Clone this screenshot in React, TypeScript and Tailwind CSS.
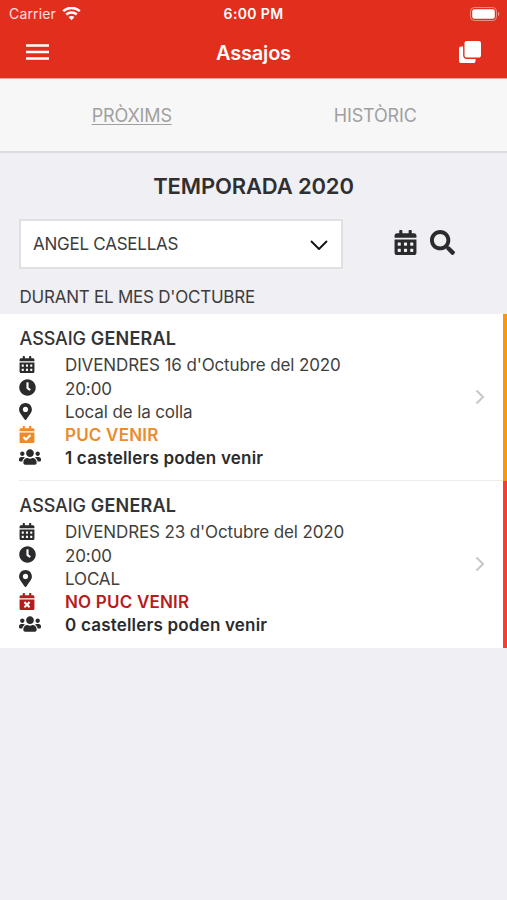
import type { ReactNode } from 'react';
import {
  FaCalendarAlt,
  FaCalendarCheck,
  FaCalendarTimes,
  FaClock,
  FaClone,
  FaMapMarkerAlt,
  FaSearch,
  FaUsers,
} from 'react-icons/fa';

type Rehearsal = {
  date: string;
  time: string;
  place: string;
  going: boolean;
  count: number;
};

const rehearsals: Rehearsal[] = [
  { date: "DIVENDRES 16 d'Octubre del 2020", time: '20:00', place: 'Local de la colla', going: true, count: 1 },
  { date: "DIVENDRES 23 d'Octubre del 2020", time: '20:00', place: 'LOCAL', going: false, count: 0 },
];

const StatusBar = () => (
  <div className="grid h-[27px] grid-cols-3 items-center pl-[9px] pr-[7px] text-white">
    <div className="flex items-center gap-1.5">
      <span className="text-[14px] tracking-[0.15px] text-white/85">Carrier</span>
      <svg width="19" height="14" viewBox="0 0 19 14" fill="none" stroke="currentColor" strokeWidth="2.5">
        <path d="M1.2 4.2C5.9-.2 13.1-.2 17.8 4.2" />
        <path d="M4.2 7.5C7.2 4.7 11.8 4.7 14.8 7.5" />
        <path d="M9.5 13.2 6.5 10.1C8.2 8.7 10.8 8.7 12.5 10.1Z" fill="currentColor" stroke="none" />
      </svg>
    </div>
    <span className="-ml-[2px] text-center text-[14px] font-semibold tracking-[0.35px]">6:00 PM</span>
    <svg className="justify-self-end" width="30" height="14" viewBox="0 0 30 14">
      <rect x=".5" y=".5" width="26" height="13" rx="3.8" fill="none" stroke="#fff" strokeOpacity=".45" />
      <rect x="2.2" y="2.2" width="22.6" height="9.6" rx="2.2" fill="#fff" />
      <path d="M28 5v4c1.8-.8 1.8-3.2 0-4Z" fill="#fff" fillOpacity=".5" />
    </svg>
  </div>
);

const Header = () => (
  <header className="h-[79px] border-b border-[#eda59c] bg-[#e22e1c]">
    <StatusBar />
    <div className="grid h-[50px] grid-cols-3 items-center pl-[26px] pr-[26px] text-white">
      <svg width="23" height="16" viewBox="0 0 23 16" fill="none" stroke="currentColor" strokeWidth="2.4">
        <path d="M0 1.5h23M0 8h23M0 14.5h23" />
      </svg>
      <h1 className="pt-px text-center text-[20px] font-semibold tracking-[-0.2px]">Assajos</h1>
      <FaClone className="justify-self-end text-[22px]" />
    </div>
  </header>
);

const Row = ({ icon, children, className = '' }: { icon: ReactNode; children: ReactNode; className?: string }) => (
  <div className={`flex h-[23.2px] items-center ${className}`}>
    <span className="flex w-[46px] shrink-0 items-center">{icon}</span>
    <span className="pt-[3px]">{children}</span>
  </div>
);

const RehearsalItem = ({ item, last }: { item: Rehearsal; last: boolean }) => (
  <li className="flex h-[167px] bg-white pl-[19px]">
    <div className={`flex flex-1 items-center border-[#ececee] pr-[18px] ${last ? 'pb-px' : 'border-b'}`}>
      <div className="flex-1 pt-[2px] text-[17px] tracking-[-0.12px] text-[#3f3f40]">
        <h3 className="h-[26px] pl-[0.6px] text-[18px] leading-[24px] text-[#343435]">
          <span className="font-medium">ASSAIG</span> <b className="font-semibold tracking-[0.2px]">GENERAL</b>
        </h3>
        <Row icon={<FaCalendarAlt className="h-[17px] w-[16px] text-[#2b2b2d]" />}>{item.date}</Row>
        <Row icon={<FaClock className="size-[17px] text-[#2b2b2d]" />}>{item.time}</Row>
        <Row icon={<FaMapMarkerAlt className="h-[17px] w-[13px] text-[#2b2b2d]" />}>{item.place}</Row>
        {item.going ? (
          <Row
            icon={<FaCalendarCheck className="h-[17px] w-[16px]" />}
            className="font-semibold tracking-[0.2px] text-[#ec8b2c]"
          >
            PUC VENIR
          </Row>
        ) : (
          <Row
            icon={<FaCalendarTimes className="h-[17px] w-[16px]" />}
            className="font-semibold tracking-[0.2px] text-[#b71c1c]"
          >
            NO PUC VENIR
          </Row>
        )}
        <Row icon={<FaUsers className="h-[18px] w-[22px]" />} className="font-semibold tracking-[0.2px] text-[#2b2b2d]">
          {item.count} castellers poden venir
        </Row>
      </div>
      <svg width="10" height="16" viewBox="0 0 10 16" fill="none" stroke="#c7c7c9" strokeWidth="2">
        <path d="M1.5 1.5 8 8l-6.5 6.5" />
      </svg>
    </div>
    <div className={item.going ? 'w-1 bg-[#ff9500]' : 'w-1 bg-[#ff3b30]'} />
  </li>
);

export default function App() {
  return (
    <div className="h-[900px] w-[507px] overflow-hidden bg-[#efeff4] font-['Inter',sans-serif]">
      <Header />

      {/* Tabs */}
      <nav className="grid h-[74px] grid-cols-2 items-center border-b-2 border-[#dcdcde] bg-[#f7f7f7] px-[10px] pt-px text-center text-[18px] tracking-[-0.15px] text-[#a0a0a0]">
        <span className="underline underline-offset-2">PRÒXIMS</span>
        <span>HISTÒRIC</span>
      </nav>

      <h2 className="flex h-[66px] items-center justify-center text-[22px] font-semibold tracking-[-0.15px] text-[#2f2f31]">
        TEMPORADA 2020
      </h2>

      {/* Member filter */}
      <div className="flex h-[50px] items-center pl-[19px]">
        <button className="flex h-full w-[324px] items-center justify-between border-2 border-[#e0e0e3] bg-white pl-3 pr-[13px] text-[17px] tracking-[-0.25px] text-[#3c3c3d]">
          <span className="pt-[2px]">ANGEL CASELLAS</span>
          <svg className="mt-[2px]" width="18" height="11" viewBox="0 0 18 11" fill="none" stroke="#111" strokeWidth="1.8" strokeLinecap="round" strokeLinejoin="round">
            <path d="m1.5 1.5 7.5 7.5 7.5-7.5" />
          </svg>
        </button>
        <div className="ml-[50px] flex items-center gap-3 pb-1 text-[#2b2b2d]">
          <FaCalendarAlt className="size-[25px]" />
          <FaSearch className="size-[25px]" />
        </div>
      </div>

      <p className="flex h-[45px] items-center pl-[19.5px] pt-[12px] text-[17px] tracking-[-0.23px] text-[#3c3c3d]">
        DURANT EL MES D&apos;OCTUBRE
      </p>

      <ul>
        {rehearsals.map((item, i) => (
          <RehearsalItem key={item.date} item={item} last={i === rehearsals.length - 1} />
        ))}
      </ul>
    </div>
  );
}
